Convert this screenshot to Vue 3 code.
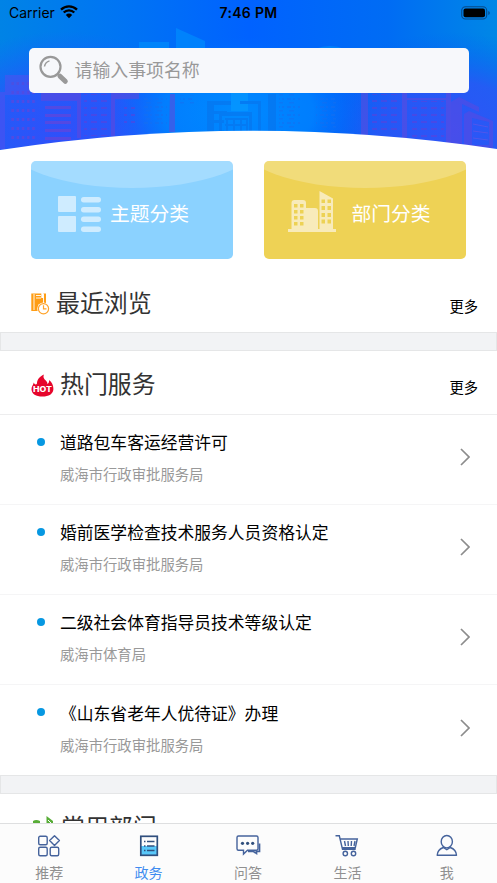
<script setup>
const services = [
  { title: '道路包车客运经营许可', dept: '威海市行政审批服务局' },
  { title: '婚前医学检查技术服务人员资格认定', dept: '威海市行政审批服务局' },
  { title: '二级社会体育指导员技术等级认定', dept: '威海市体育局' },
  { title: '《山东省老年人优待证》办理', dept: '威海市行政审批服务局' },
]
const tabs = [
  { label: '推荐', icon: 'grid' },
  { label: '政务', icon: 'doc', active: true },
  { label: '问答', icon: 'chat' },
  { label: '生活', icon: 'cart' },
  { label: '我', icon: 'user' },
]
</script>

<template>
  <div class="screen">
    <header class="hero">
      <svg class="hero-bg" viewBox="0 0 497 151" width="497" height="151" aria-hidden="true">
        <defs>
          <linearGradient id="sky" x1="0" y1="0" x2="1" y2="0">
            <stop offset="0" stop-color="#0083e6" />
            <stop offset=".25" stop-color="#0074f4" />
            <stop offset=".5" stop-color="#0062ff" />
            <stop offset=".78" stop-color="#006cf4" />
            <stop offset="1" stop-color="#0087e6" />
          </linearGradient>
          <radialGradient id="violetL"><stop offset="0" stop-color="#2f50fa" /><stop offset=".5" stop-color="#2a54fb" stop-opacity=".85" /><stop offset="1" stop-color="#1760ff" stop-opacity="0" /></radialGradient>
          <radialGradient id="violetR"><stop offset="0" stop-color="#2e54f8" /><stop offset=".5" stop-color="#2a55f6" stop-opacity=".85" /><stop offset="1" stop-color="#0062f5" stop-opacity="0" /></radialGradient>
          <radialGradient id="glow"><stop offset="0" stop-color="#008aff" /><stop offset=".6" stop-color="#0082ff" stop-opacity=".85" /><stop offset="1" stop-color="#0068ff" stop-opacity="0" /></radialGradient>
          <pattern id="winA" width="5.200" height="9" patternUnits="userSpaceOnUse"><path d="M1 1h2.500v3H1z" fill="#7a3fd0" /></pattern>
          <pattern id="winB" width="10" height="7" patternUnits="userSpaceOnUse"><path d="M1 2h6v2h-6z" fill="#633fd8" /></pattern>
          <pattern id="winC" width="11" height="8" patternUnits="userSpaceOnUse"><path d="M1 2h4v2h-4zM7 2h2v2h-2zM3 6h5v1.500h-5z" fill="#176ff0" /></pattern>
        </defs>
        <rect width="497" height="151" fill="url(#sky)" />
        <ellipse cx="62" cy="134" rx="150" ry="103" fill="url(#violetL)" />
        <ellipse cx="450" cy="130" rx="145" ry="98" fill="url(#violetR)" />
        <ellipse cx="238" cy="112" rx="125" ry="76" fill="url(#glow)" />
        <g opacity=".5">
          <path d="M139 42h30v10h-30zM176 28l29 13v10h-29zM315 49q15-6 30 0z" fill="#0099ff" />
          <path d="M5 75h25v20H5zM0 92h5v57H0z" fill="#5550ef" />
          <path d="M41 93h40v45h-4v-37H41zM111 93h28v6h-24v37h-4zM170 94h5v38h-6z" fill="#6a45d8" />
          <path d="M11 80h25v61H11z" fill="url(#winA)" />
          <path d="M45 106h26v3H45zM45 114h26v3H45zM45 121h26v3H45zM45 129h26v3H45zM45 137h26v3H45z" fill="#7c40cd" />
          <path d="M84 94h23v42H84zM124 102h11v26h-11z" fill="url(#winB)" />
          <path d="M142 96h25v28h-25zM180 95h14v9h-14zM279 94h21v34h-21zM316 96h20v35h-20z" fill="url(#winC)" />
          <path d="M231 93h17v18h-17z" fill="#08a0ff" />
          <path d="M207 101h24v4h-17v6h13v3h-13v6h10v3h-10v8h-7zM219 112h33v19h-3v-15h-27v15h-3zM240 101h21v30h-3v-27h-18zM268 94h8v37h-8zM225 118h22v2h-22zM225 124h22v2h-22zM226 118h2v13h-2zM233 118h2v13h-2zM240 118h2v13h-2zM246 118h2v13h-2z" fill="#0870e8" />
          <path d="M361 93h7v43h-7zM402 93h5v46h-5zM446 93h5v51h-5zM407 98h39v2h-39z" fill="#6849db" />
          <path d="M372 94h28v41h-28zM412 101h32v39h-32z" fill="url(#winB)" />
          <path d="m451 102 8-5 20 10v5l-17-8v42h-11zM464 114l5-3 24 10v28h-29zM472 118v27h17v-23z" fill="#6148df" fill-rule="evenodd" />
          <path d="m473 124 15 3M473 131l15 2M473 138l15 2" stroke="#7756e2" />
        </g>
        <path d="M0 150Q248 112 497 149V151H0z" fill="#fff" />
      </svg>
      <div class="status">
        <div class="carrier">
          <span>Carrier</span>
          <svg width="18" height="14" viewBox="0 0 18 14"><path d="M1 4.600a11.400 11.400 0 0 1 16 0M3.700 7.500a7.500 7.500 0 0 1 10.600 0" fill="none" stroke="#000" stroke-width="2.300" /><path d="M5.800 9.900a4.600 4.600 0 0 1 6.400 0L9 13.200z" /></svg>
        </div>
        <time>7:46 PM</time>
        <svg class="battery" width="30" height="14" viewBox="0 0 30 14"><rect x=".7" y=".7" width="25" height="12.300" rx="3.800" fill="none" stroke="#064b89" stroke-width="1.100" /><rect x="2.500" y="2.500" width="21.500" height="8.800" rx="2" /><path d="M27.300 5v4q1.500-.5 1.500-2t-1.500-2" fill="#064b89" /></svg>
      </div>
      <div class="search">
        <svg width="32" height="32" viewBox="0 0 32 32"><circle cx="12.500" cy="12.800" r="10" fill="none" stroke="#999" stroke-width="2.200" /><path d="M6.500 12.500a7 7 0 0 1 5-5.600" fill="none" stroke="#999" stroke-width="1.500" /><path d="m19.700 20 3 3" stroke="#999" stroke-width="2" /><path d="m22 22.200 5.300 5.100" stroke="#999" stroke-width="5" stroke-linecap="round" /></svg>
        <span>请输入事项名称</span>
      </div>
    </header>

    <div class="cards">
      <div class="card blue">
        <svg width="44" height="36" viewBox="0 0 44 36" fill="#cfecff"><rect width="18" height="16" rx="1" /><rect y="20" width="18" height="16" rx="1" /><rect x="23" y="1" width="20" height="5.500" rx="2.700" /><rect x="23" y="11" width="20" height="5.500" rx="2.700" /><rect x="23" y="20.500" width="20" height="5.500" rx="2.700" /><rect x="23" y="30.500" width="20" height="5.500" rx="2.700" /></svg>
        <span>主题分类</span>
      </div>
      <div class="card gold">
        <svg width="48" height="42" viewBox="0 0 48 42"><path d="M0 38h3.500V12q0-3 3-3H15q3 0 3 3v5h9q3 0 3 3v18h1.500V0L45 7.500V38h3v3H0z" fill="#f8ebba" /><path d="M6 13h3.500v3.500H6zM12 13h3.500v3.500H12zM6 19h3.500v3.500H6zM12 19h3.500v3.500H12zM6 25h3.500v3.500H6zM12 25h3.500v3.500H12zM6 31h3.500v3.500H6zM12 31h3.500v3.500H12zM33.500 8.500H37v3.500h-3.500zM39.500 8.500H43v3.500h-3.500zM33.500 15H37v4h-3.500zM39.500 15H43v4h-3.500zM33.500 22H37v4h-3.500zM39.500 22H43v4h-3.500zM33.500 28.500H37v4h-3.500zM39.500 28.500H43v4h-3.500z" fill="#edd254" /></svg>
        <span>部门分类</span>
      </div>
    </div>

    <section class="section-head recent">
      <svg class="recent-icon" width="19" height="23" viewBox="0 0 19 23"><path d="M.3.500H15V14H.3zM.3 14H8v4H.3z" fill="#ff9d15" /><path d="M3 1v16M5 2.500h5M5 5h5M12.500 1v12" stroke="#fff" stroke-width=".9" /><path d="M10.300 0h2.200v5h-2.200z" fill="#fff" /><circle cx="12.500" cy="15.700" r="6.300" fill="#fff" /><circle cx="12.500" cy="15.700" r="5.100" fill="#fff" stroke="#ffa32a" stroke-width="1.200" /><path d="M12.500 12.200v3.600h3" fill="none" stroke="#ffa32a" stroke-width="1.200" /></svg>
      <h2>最近浏览</h2>
      <a>更多</a>
    </section>
    <div class="band"></div>
    <section class="section-head hot">
      <svg class="hot-icon" width="23" height="24" viewBox="0 0 23 24"><path d="M2.800 8.500C3.500 10.800 5.200 11 6 9.500 6 5.500 8.500 2.500 13 .5c-1.300 3 .2 4.500 2 6.200 1.300 1.300 1.500 2.500 1.300 3.300C18 9 18.300 7.500 18 6c3 2 4.500 5.500 4.400 9-.2 5-4.500 7.500-11 7.500S.8 20 .5 15.500C.4 12.500 2 11.500 2.800 8.500z" fill="#e6052b" /><text x="2" y="18" textLength="19" lengthAdjust="spacingAndGlyphs">HOT</text></svg>
      <h2>热门服务</h2>
      <a>更多</a>
    </section>
    <ul class="services">
      <li v-for="service in services" :key="service.title">
        <i class="dot"></i>
        <div class="copy"><h3>{{ service.title }}</h3><p>{{ service.dept }}</p></div>
        <svg width="10" height="18" viewBox="0 0 10 18"><path d="m1 1 8 8-8 8" fill="none" stroke="#8c8c8c" stroke-width="1.700" /></svg>
      </li>
    </ul>
    <div class="band"></div>
    <section class="section-head departments">
      <svg width="23" height="20" viewBox="0 0 23 20"><path d="M2 5q3-2 7 0v13H2zM15.500 0l6.500 5v13h-6.500z" fill="#58ad37" /><path d="m17 4 3 3v2" fill="none" stroke="#fff" /></svg>
      <h2>常用部门</h2>
    </section>

    <nav class="tabs">
      <a v-for="tab in tabs" :key="tab.label" :class="{ active: tab.active }">
        <svg width="26" height="24" viewBox="0 0 26 24" fill="none" stroke="#45639c" stroke-width="1.400">
          <g v-if="tab.icon === 'grid'"><rect x="2.700" y="2.300" width="8.500" height="8.500" rx="1.500" /><rect x="2.700" y="13.300" width="8.500" height="8.500" rx="1.500" /><rect x="14.200" y="13.300" width="8.500" height="8.500" rx="1.500" /><path d="m18.500 1.700 4.900 4.900-4.900 4.900-4.900-4.900z" stroke-linejoin="round" /></g>
          <g v-else-if="tab.icon === 'doc'"><path d="M5 12h16v9H5z" fill="#59c8fa" stroke="none" /><rect x="4.800" y="2.300" width="16.500" height="19" stroke="#304f7d" stroke-width="1.700" /><path d="M8 7.500h1.500M11 7.500h7.500M8 12h1.500M11 12h7.500M8 16.500h1.500M11 16.500h7.500" stroke="#304f7d" /></g>
          <g v-else-if="tab.icon === 'chat'"><path d="M3.500 2h18q1.500 0 1.500 1.500v11.200q0 1.500-1.500 1.500H12.500L8.500 20v-3.800h-5Q2 16.200 2 14.700V3.500Q2 2 3.500 2z" /><path d="M24.500 9.500v8h-3v2l-3-2H13" stroke-width="1.700" /><g fill="#304f7d" stroke="none"><circle cx="7.500" cy="9.300" r="1.600" /><circle cx="12.600" cy="9.300" r="1.600" /><circle cx="17.700" cy="9.300" r="1.600" /></g></g>
          <g v-else-if="tab.icon === 'cart'"><path d="M1.500 1.800h3.800l3.200 13.400h13.200M6.300 5h17l-2 8.700H8.300M10.500 7l1 5M14 7l.3 5M17.500 7l-.3 5M21 7l-1 5" /><circle cx="11.300" cy="19.500" r="2.200" /><circle cx="19.500" cy="19.500" r="2.200" /></g>
          <g v-else><ellipse cx="12.800" cy="7.700" rx="5.600" ry="6.200" /><path d="M9.300 13.500Q3.500 15.500 3.200 21.300h19.300q-.3-5.800-6.200-7.800l-3.500 2.200z" stroke-linejoin="round" /></g>
        </svg>
        <span>{{ tab.label }}</span>
      </a>
    </nav>
  </div>
</template>

<style>
body { margin: 0; background: #fff; }
</style>

<style scoped>
* { box-sizing: border-box; }
.screen { position: relative; width: 497px; height: 883px; overflow: hidden; display: flex; flex-direction: column; background: #fff; font-family: "Noto Sans CJK SC", sans-serif; color: #000; }
.screen > * { flex-shrink: 0; }
h2, h3, p, ul { margin: 0; padding: 0; font-weight: 400; }
.hero { position: relative; height: 151px; }
.hero-bg { position: absolute; inset: 0; }
.status { position: relative; height: 26px; display: grid; grid-template-columns: 1fr auto 1fr; align-items: center; padding: 0 7px 0 9px; font-family: Inter, sans-serif; font-size: 14px; line-height: 26px; }
.carrier { display: flex; align-items: center; gap: 5px; }
.carrier svg { margin-top: -2px; }
.status time { font-weight: 600; letter-spacing: .3px; margin-left: -2px; }
.battery { justify-self: end; margin-right: -1px; }
.search { position: relative; width: 440px; height: 45px; margin: 22px 0 0 28.500px; padding-left: 9px; border-radius: 5px; display: flex; align-items: center; gap: 5px; background: #f7f8fb; color: #999; font-size: 17.900px; }
.search svg { margin-top: -2px; }
.search span { margin-top: -4px; }
.cards { display: flex; gap: 31px; padding: 9.500px 31px 0; }
.card { position: relative; overflow: hidden; width: 202px; height: 98.500px; border-radius: 5px; display: flex; align-items: center; color: #fff; font-size: 19.800px; }
.card::before { content: ""; position: absolute; left: -26px; right: -26px; top: -67px; height: 94px; border-radius: 50%; background: rgba(255,255,255,.22); }
.card svg, .card span { position: relative; }
.blue { background: #8bd2ff; padding-left: 27px; gap: 8px; }
.blue svg { margin-top: 8px; }
.card span { margin-top: 5px; }
.gold { background: #eed255; padding-left: 23.500px; gap: 16px; }
.gold svg { margin-top: 5px; }
.section-head { display: flex; align-items: center; padding: 0 19px 0 31px; }
.section-head h2 { font-size: 23.900px; line-height: 36px; color: #333; }
.section-head a { margin-left: auto; font-size: 14.300px; }
.recent { height: 73px; padding-top: 12px; }
.recent h2 { margin-left: 6px; }
.recent a { margin-top: 7px; }
.recent-icon { margin-top: 6px; }
.band { height: 19px; background: #f2f3f5; border: 1.500px solid #e5e6e7; }
.hot { height: 63.500px; padding-top: 2px; border-bottom: 1.500px solid #ededee; }
.hot h2 { margin-left: 6px; }
.hot a { margin-top: 6px; }
.hot-icon { margin-top: 5px; }
.hot-icon text { font: 800 7.500px Inter, sans-serif; fill: #fff; }
.services { list-style: none; }
.services li { height: 90.200px; display: flex; align-items: flex-start; padding: 0 27px 0 37px; border-bottom: 1.500px solid #f5f5f6; }
.services li:last-child { border: 0; }
.dot { width: 8px; height: 8px; margin-top: 23px; border-radius: 50%; background: #0798e2; }
.copy { margin: 14.500px 0 0 15px; flex: 1; }
.copy h3 { font-size: 16.800px; line-height: 26px; }
.copy p { margin-top: 8px; font-size: 14.350px; line-height: 22px; color: #999; }
.services svg { margin-top: 33.500px; }
.departments { height: 60px; padding-top: 4px; }
.departments h2 { margin-left: 7px; }
.tabs { position: absolute; left: 0; right: 0; bottom: 0; height: 60px; border-top: 1.500px solid #dedfe0; background: #fcfcfc; display: grid; grid-template-columns: repeat(5, 1fr); }
.tabs a { display: flex; flex-direction: column; align-items: center; padding-top: 10px; color: #909090; font-size: 14px; line-height: 20px; }
.tabs svg { margin-left: -1px; }
.tabs span { margin: 4px 1px 0 0; }
.tabs .active { color: #3f8cf0; }
</style>
